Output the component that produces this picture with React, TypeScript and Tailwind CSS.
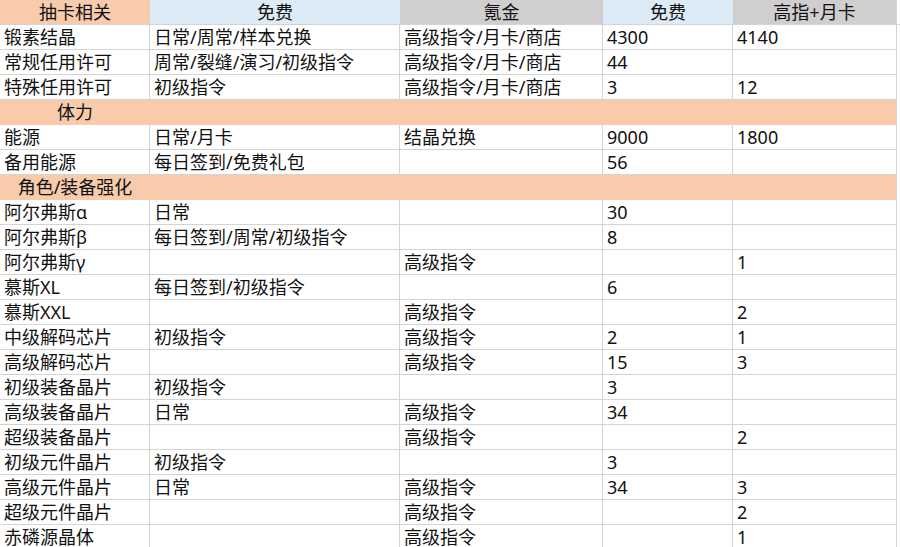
type Row =
  | { kind: 'section'; label: string }
  | { kind: 'data'; cells: [string, string, string, string, string] };

const rows: Row[] = [
  { kind: 'data', cells: ['锻素结晶', '日常/周常/样本兑换', '高级指令/月卡/商店', '4300', '4140'] },
  { kind: 'data', cells: ['常规任用许可', '周常/裂缝/演习/初级指令', '高级指令/月卡/商店', '44', ''] },
  { kind: 'data', cells: ['特殊任用许可', '初级指令', '高级指令/月卡/商店', '3', '12'] },
  { kind: 'section', label: '体力' },
  { kind: 'data', cells: ['能源', '日常/月卡', '结晶兑换', '9000', '1800'] },
  { kind: 'data', cells: ['备用能源', '每日签到/免费礼包', '', '56', ''] },
  { kind: 'section', label: '角色/装备强化' },
  { kind: 'data', cells: ['阿尔弗斯α', '日常', '', '30', ''] },
  { kind: 'data', cells: ['阿尔弗斯β', '每日签到/周常/初级指令', '', '8', ''] },
  { kind: 'data', cells: ['阿尔弗斯γ', '', '高级指令', '', '1'] },
  { kind: 'data', cells: ['慕斯XL', '每日签到/初级指令', '', '6', ''] },
  { kind: 'data', cells: ['慕斯XXL', '', '高级指令', '', '2'] },
  { kind: 'data', cells: ['中级解码芯片', '初级指令', '高级指令', '2', '1'] },
  { kind: 'data', cells: ['高级解码芯片', '', '高级指令', '15', '3'] },
  { kind: 'data', cells: ['初级装备晶片', '初级指令', '', '3', ''] },
  { kind: 'data', cells: ['高级装备晶片', '日常', '高级指令', '34', ''] },
  { kind: 'data', cells: ['超级装备晶片', '', '高级指令', '', '2'] },
  { kind: 'data', cells: ['初级元件晶片', '初级指令', '', '3', ''] },
  { kind: 'data', cells: ['高级元件晶片', '日常', '高级指令', '34', '3'] },
  { kind: 'data', cells: ['超级元件晶片', '', '高级指令', '', '2'] },
  { kind: 'data', cells: ['赤磷源晶体', '', '高级指令', '', '1'] },
];

const font = { fontFamily: '"Noto Sans", "Noto Sans CJK SC", sans-serif' };

export default function App() {
  return (
    <div className="h-[547px] w-[900px] overflow-hidden bg-white text-[18px] leading-[24px] text-[#111]" style={font}>
      {/* header */}
      <div className="grid grid-cols-[150px_250px_203px_130px_164px_3px] border-b border-[#d4d4d4]">
        <div className="h-[24px] bg-[#f8cbad] text-center">抽卡相关</div>
        <div className="h-[24px] bg-[#ddebf7] text-center">免费</div>
        <div className="h-[24px] bg-[#d0cece] text-center">氪金</div>
        <div className="h-[24px] bg-[#ddebf7] text-center">免费</div>
        <div className="h-[24px] border-r border-[#d4d4d4] bg-[#d0cece] text-center">高指+月卡</div>
        <div />
      </div>

      {rows.map((row, i) =>
        row.kind === 'section' ? (
          <div key={i} className="grid grid-cols-[150px_747px_3px]">
            <div className="h-[25px] bg-[#f8cbad] whitespace-nowrap text-center leading-[25px]">{row.label}</div>
            <div className="h-[25px] border-r border-[#d4d4d4] bg-[#f8cbad]" />
            <div />
          </div>
        ) : (
          <div key={i} className="grid grid-cols-[150px_250px_203px_130px_164px_3px]">
            {row.cells.map((c, j) => (
              <div
                key={j}
                className="h-[25px] whitespace-nowrap border-b border-r border-[#d4d4d4] pl-[4px] leading-[25px]"
              >
                {c}
              </div>
            ))}
            <div />
          </div>
        ),
      )}
    </div>
  );
}
